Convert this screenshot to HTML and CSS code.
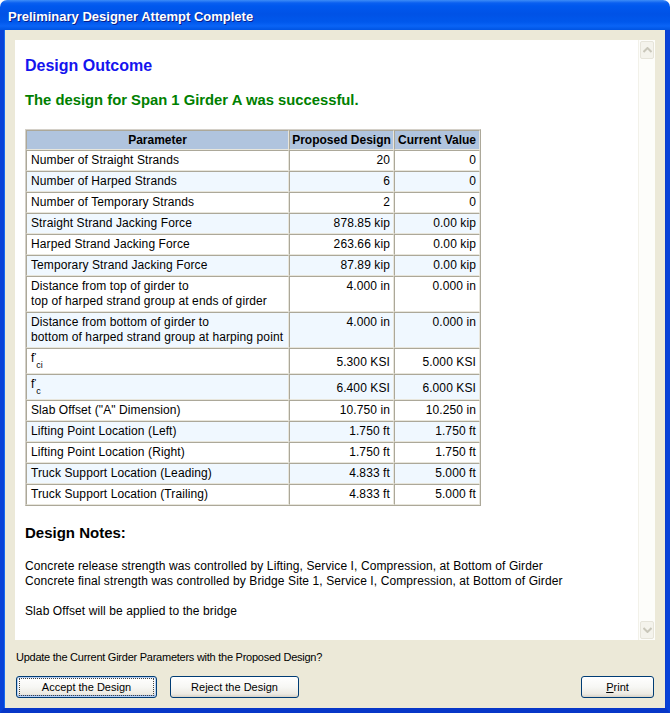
FILE: index.html
```html
<!DOCTYPE html>
<html>
<head>
<meta charset="utf-8">
<link rel="stylesheet" href="styles.css">
</head>
<body>
<div class="window">
  <div class="titlebar"><span class="title">Preliminary Designer Attempt Complete</span></div>
  <div class="frame">
    <div class="report">
      <div class="report-body">
        <h1 class="outcome">Design Outcome</h1>
        <p class="success">The design for Span 1 Girder A was successful.</p>
        <table class="params">
          <colgroup><col class="c1"><col class="c2"><col class="c3"></colgroup>
          <thead>
            <tr><th>Parameter</th><th>Proposed Design</th><th>Current Value</th></tr>
          </thead>
          <tbody>
            <tr><td>Number of Straight Strands</td><td class="num">20</td><td class="num">0</td></tr>
            <tr class="alt"><td>Number of Harped Strands</td><td class="num">6</td><td class="num">0</td></tr>
            <tr><td>Number of Temporary Strands</td><td class="num">2</td><td class="num">0</td></tr>
            <tr class="alt"><td>Straight Strand Jacking Force</td><td class="num">878.85 kip</td><td class="num">0.00 kip</td></tr>
            <tr><td>Harped Strand Jacking Force</td><td class="num">263.66 kip</td><td class="num">0.00 kip</td></tr>
            <tr class="alt"><td>Temporary Strand Jacking Force</td><td class="num">87.89 kip</td><td class="num">0.00 kip</td></tr>
            <tr class="two"><td>Distance from top of girder to<br>top of harped strand group at ends of girder</td><td class="num">4.000 in</td><td class="num">0.000 in</td></tr>
            <tr class="alt two"><td>Distance from bottom of girder to<br>bottom of harped strand group at harping point</td><td class="num">4.000 in</td><td class="num">0.000 in</td></tr>
            <tr class="frow"><td><span class="fsym">f<sup>'</sup><sub>ci</sub></span></td><td class="num">5.300 KSI</td><td class="num">5.000 KSI</td></tr>
            <tr class="alt frow"><td><span class="fsym">f<sup>'</sup><sub>c</sub></span></td><td class="num">6.400 KSI</td><td class="num">6.000 KSI</td></tr>
            <tr><td>Slab Offset ("A" Dimension)</td><td class="num">10.750 in</td><td class="num">10.250 in</td></tr>
            <tr class="alt"><td>Lifting Point Location (Left)</td><td class="num">1.750 ft</td><td class="num">1.750 ft</td></tr>
            <tr><td>Lifting Point Location (Right)</td><td class="num">1.750 ft</td><td class="num">1.750 ft</td></tr>
            <tr class="alt"><td>Truck Support Location (Leading)</td><td class="num">4.833 ft</td><td class="num">5.000 ft</td></tr>
            <tr><td>Truck Support Location (Trailing)</td><td class="num">4.833 ft</td><td class="num">5.000 ft</td></tr>
          </tbody>
        </table>
        <h2 class="notes-title">Design Notes:</h2>
        <p class="notes">Concrete release strength was controlled by Lifting, Service I, Compression, at Bottom of Girder<br>Concrete final strength was controlled by Bridge Site 1, Service I, Compression, at Bottom of Girder<br><br>Slab Offset will be applied to the bridge</p>
      </div>
      <div class="scrollbar">
        <div class="sb-btn"><svg width="9" height="6" viewBox="0 0 9 6"><path d="M0.5 5 L4.5 1 L8.5 5" fill="none" stroke="#c9c7ba" stroke-width="2"/></svg></div>
        <div class="sb-track"></div>
        <div class="sb-btn"><svg width="9" height="6" viewBox="0 0 9 6"><path d="M0.5 1 L4.5 5 L8.5 1" fill="none" stroke="#c9c7ba" stroke-width="2"/></svg></div>
      </div>
    </div>
    <p class="question">Update the Current Girder Parameters with the Proposed Design?</p>
    <div class="actions">
      <button class="btn btn-accept"><span class="focus">Accept the Design</span></button>
      <button class="btn btn-reject">Reject the Design</button>
      <span class="spacer"></span>
      <button class="btn btn-print"><u>P</u>rint</button>
    </div>
  </div>
</div>
</body>
</html>
```

FILE: styles.css
```css
html, body {
  margin: 0;
  padding: 0;
  background: #ffffff;
}

.window {
  width: 670px;
  height: 713px;
  display: flex;
  flex-direction: column;
  font-family: "Liberation Sans", Arial, sans-serif;
}

.titlebar {
  height: 30px;
  flex: none;
  border-radius: 7px 7px 0 0;
  background: linear-gradient(to bottom, #3d8cf7 0px, #0a5ff0 3px, #0058ee 6px, #0052e6 14px, #0058ec 22px, #0a64f6 26px, #0054e2 30px);
  display: flex;
  align-items: center;
  padding-left: 8px;
  box-sizing: border-box;
}

.title {
  color: #ffffff;
  font-family: "Liberation Sans", Arial, sans-serif;
  font-weight: bold;
  font-size: 13px;
  text-shadow: 1px 1px 0 #0a1e8c;
  position: relative;
  top: 1px;
}

.frame {
  flex: 1;
  background: #ece9d8;
  border-left: 4px solid #0842d8;
  border-right: 4px solid #0842d8;
  border-bottom: 5px solid #0737c8;
  display: flex;
  flex-direction: column;
  box-shadow: inset 1px 0 0 #166bf0, inset -1px 0 0 #0a3ccc;
}

.report {
  margin: 10px 11px 0 11px;
  height: 600px;
  flex: none;
  display: flex;
  background: #ffffff;
}

.report-body {
  flex: 1;
  padding: 16px 10px 0 10px;
  overflow: hidden;
}

.outcome {
  margin: 0;
  font-size: 16px;
  line-height: 19px;
  font-weight: bold;
  color: #1414ee;
}

.success {
  margin: 17px 0 0 0;
  font-size: 14.8px;
  line-height: 17px;
  font-weight: bold;
  color: #008000;
}

.params {
  margin-top: 20px;
  border-collapse: separate;
  border-spacing: 0;
  table-layout: fixed;
  width: 454px;
  font-size: 12px;
  line-height: 15px;
  letter-spacing: 0.1px;
  border: 1px solid #aca899;
  border-top-color: #d4d0c8;
  border-left-color: #d4d0c8;
}

.c1 { width: 263px; }
.c2 { width: 105px; }
.c3 { width: 86px; }

.params th,
.params td {
  border: 1px solid #c9c5b5;
  border-top-color: #aca899;
  border-left-color: #aca899;
  border-bottom-color: #e8e6dc;
  border-right-color: #e8e6dc;
  padding: 2px 3px 2px 4px;
  white-space: nowrap;
  overflow: hidden;
  color: #000;
}

.params th {
  background: #b0c4de;
  font-weight: bold;
  text-align: center;
  letter-spacing: 0;
  padding: 2px 2px 1px 2px;
}

.params tbody tr { background: #ffffff; }
.params tbody tr.alt { background: #f0f8ff; }

.params td.num {
  text-align: right;
  padding-right: 3px;
}

.params tr.two td {
  vertical-align: top;
  padding-top: 2px;
  padding-bottom: 2px;
}

.params tr.frow td {
  height: 22px;
  padding-top: 2px;
  padding-bottom: 0;
  vertical-align: top;
}

.params tr.frow td.num {
  vertical-align: middle;
}

.fsym {
  display: inline-block;
  font-size: 12px;
  line-height: 12px;
}

.fsym sup {
  font-size: 9px;
  vertical-align: 3px;
  line-height: 0;
}

.fsym sub {
  font-size: 9px;
  vertical-align: -6px;
  line-height: 0;
}

.notes-title {
  margin: 18px 0 0 0;
  font-size: 15px;
  line-height: 18px;
  font-weight: bold;
  color: #000;
}

.notes {
  margin: 17px 0 0 0;
  font-size: 12px;
  line-height: 15px;
  letter-spacing: 0.1px;
  color: #000;
}

.scrollbar {
  width: 17px;
  flex: none;
  display: flex;
  flex-direction: column;
  background: #fdfdfa;
  border-left: 1px solid #f2f1e9;
  box-sizing: border-box;
}

.sb-btn {
  height: 16px;
  margin: 1px 1px;
  border: 1px solid #e6e4da;
  border-radius: 2px;
  background: #f4f3ec;
  display: flex;
  align-items: center;
  justify-content: center;
  flex: none;
}

.sb-track {
  flex: 1;
}

.question {
  margin: 11px 0 0 12px;
  font-size: 11px;
  line-height: 13px;
  letter-spacing: -0.25px;
  color: #000;
}

.actions {
  margin: 12px 12px 0 12px;
  display: flex;
  gap: 13px;
}

.spacer { flex: 1; }

.btn {
  height: 22px;
  font-family: "Liberation Sans", Arial, sans-serif;
  font-size: 11px;
  color: #000;
  border: 1px solid #003c74;
  border-radius: 3px;
  background: linear-gradient(to bottom, #ffffff 0%, #f7f7f4 50%, #eceae2 85%, #d6d0c5 100%);
  padding: 0;
  display: flex;
  align-items: center;
  justify-content: center;
}

.btn-accept {
  width: 141px;
  box-shadow: inset 0 0 0 1px #b9d1f4, inset 0 -1px 0 1px #89ade4;
}

.focus {
  display: flex;
  align-items: center;
  justify-content: center;
  width: 133px;
  height: 16px;
  outline: 1px dotted #444;
}

.btn-reject { width: 129px; }
.btn-print { width: 73px; }
```
